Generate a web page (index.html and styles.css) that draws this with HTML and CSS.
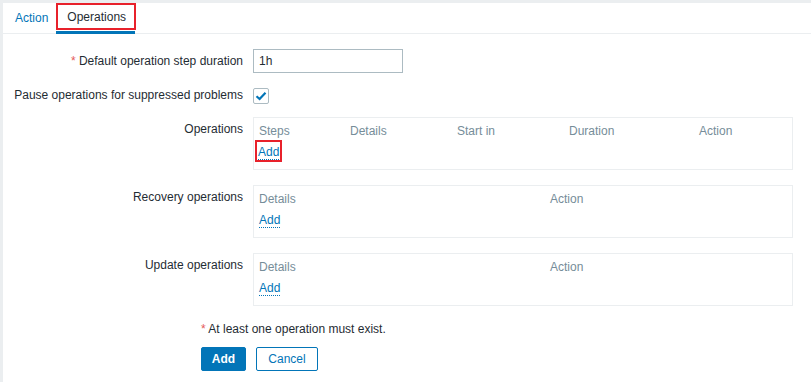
FILE: index.html
```html
<!DOCTYPE html>
<html lang="en">
<head>
    <meta charset="UTF-8">
    <title>Action operations</title>
    <link rel="stylesheet" href="styles.css">
</head>
<body>
    <div class="panel">
        <div class="tabs">
            <a class="tab" href="#">Action</a>
            <div class="tab-active">
                <a class="tab-marked" href="#">Operations</a>
            </div>
        </div>

        <div class="form">
            <div class="row">
                <label class="label"><span class="req">*</span> Default operation step duration</label>
                <div class="field"><input class="text-input" type="text" value="1h"></div>
            </div>
            <div class="row">
                <label class="label">Pause operations for suppressed problems</label>
                <div class="field">
                    <span class="checkbox">
                        <svg width="12" height="10" viewBox="0 0 12 10"><path d="M1.5 5.2 L4.6 8 L10.5 1.8" fill="none" stroke="#0275b8" stroke-width="2.2"/></svg>
                    </span>
                </div>
            </div>
            <div class="row row-box">
                <label class="label">Operations</label>
                <div class="field">
                    <div class="ops-box">
                        <div class="ops-grid cols-5">
                            <div class="th">Steps</div>
                            <div class="th">Details</div>
                            <div class="th">Start in</div>
                            <div class="th">Duration</div>
                            <div class="th">Action</div>
                        </div>
                        <div class="add-row"><span class="marked"><a class="link" href="#">Add</a></span></div>
                    </div>
                </div>
            </div>
            <div class="row row-box">
                <label class="label">Recovery operations</label>
                <div class="field">
                    <div class="ops-box">
                        <div class="ops-grid cols-2">
                            <div class="th">Details</div>
                            <div class="th">Action</div>
                        </div>
                        <div class="add-row"><a class="link" href="#">Add</a></div>
                    </div>
                </div>
            </div>
            <div class="row row-box">
                <label class="label">Update operations</label>
                <div class="field">
                    <div class="ops-box">
                        <div class="ops-grid cols-2">
                            <div class="th">Details</div>
                            <div class="th">Action</div>
                        </div>
                        <div class="add-row"><a class="link" href="#">Add</a></div>
                    </div>
                </div>
            </div>
            <div class="note"><span class="req">*</span> At least one operation must exist.</div>
            <div class="buttons">
                <button class="btn btn-primary">Add</button>
                <button class="btn btn-alt">Cancel</button>
            </div>
        </div>
    </div>
</body>
</html>
```

FILE: styles.css
```css
body {
    margin: 0;
    padding: 3px 0 0 3px;
    background-color: #ebeef0;
    font-family: Arial, "Liberation Sans", sans-serif;
    font-size: 12px;
    color: #1f2c33;
    height: 379px;
    overflow: hidden;
}
.panel {
    background: white;
    height: 100%;
}
.tabs {
    display: flex;
    height: 30px;
    border-bottom: 1px solid #ebeef0;
}
.tab {
    display: block;
    padding: 0 8px 0 12px;
    line-height: 30px;
    color: #0275b8;
    text-decoration: none;
}
.tab-active {
    height: 31px;
    box-sizing: border-box;
    border-bottom: 3px solid #0275b8;
    width: 79px;
}
.tab-marked {
    display: block;
    width: 80px;
    box-sizing: border-box;
    height: 27px;
    border: 2px solid #e8212b;
    padding-left: 9px;
    line-height: 24px;
    color: #1f2c33;
    text-decoration: none;
}
.form {
    padding-top: 15px;
}
.row {
    display: flex;
    margin-bottom: 10px;
}
.row-box {
    margin-bottom: 15px;
}
.label {
    width: 240px;
    padding-right: 10px;
    text-align: right;
    line-height: 24px;
    flex: none;
    white-space: nowrap;
}
.req {
    color: #e45959;
}
.field {
    width: 540px;
    display: flex;
    align-items: center;
}
.text-input {
    box-sizing: border-box;
    width: 150px;
    height: 24px;
    border: 1px solid #acbbc2;
    padding: 0 5px;
    font-family: Arial, "Liberation Sans", sans-serif;
    font-size: 12px;
    color: #1f2c33;
    margin: 0;
}
.checkbox {
    box-sizing: border-box;
    width: 16px;
    height: 16px;
    border: 1px solid #acbbc2;
    border-radius: 2px;
    display: flex;
    align-items: center;
    justify-content: center;
    margin-top: 1px;
}
.ops-box {
    box-sizing: border-box;
    width: 540px;
    height: 53px;
    border: 1px solid #ebeef0;
    padding-top: 6px;
}
.ops-grid {
    display: grid;
    line-height: 14px;
}
.cols-5 {
    grid-template-columns: 91px 107px 112px 130px 1fr;
}
.cols-2 {
    grid-template-columns: 291px 1fr;
}
.th {
    padding-left: 5px;
    color: #768d99;
}
.add-row {
    padding: 7px 0 0 5px;
    line-height: 14px;
    height: 15px;
}
.marked {
    display: inline-block;
    border: 2px solid #e8212b;
    padding: 2px 1px 0;
    margin: -5px 0 0 -4px;
    line-height: 16px;
}
.link {
    color: #0275b8;
    text-decoration: none;
    border-bottom: 1px dotted #0275b8;
}
.note {
    padding-left: 198px;
    line-height: 16px;
    margin-top: 4px;
}
.buttons {
    display: flex;
    gap: 10px;
    padding-left: 198px;
    margin-top: 10px;
}
.btn {
    height: 24px;
    padding: 0 11px;
    font-family: Arial, "Liberation Sans", sans-serif;
    font-size: 12px;
    border-radius: 2px;
    border: 1px solid #0275b8;
    cursor: pointer;
}
.btn-primary {
    background-color: #0275b8;
    color: white;
    font-weight: bold;
    width: 45px;
    padding: 0;
}
.btn-alt {
    background-color: white;
    color: #0275b8;
    width: 62px;
    padding: 0;
}
```
